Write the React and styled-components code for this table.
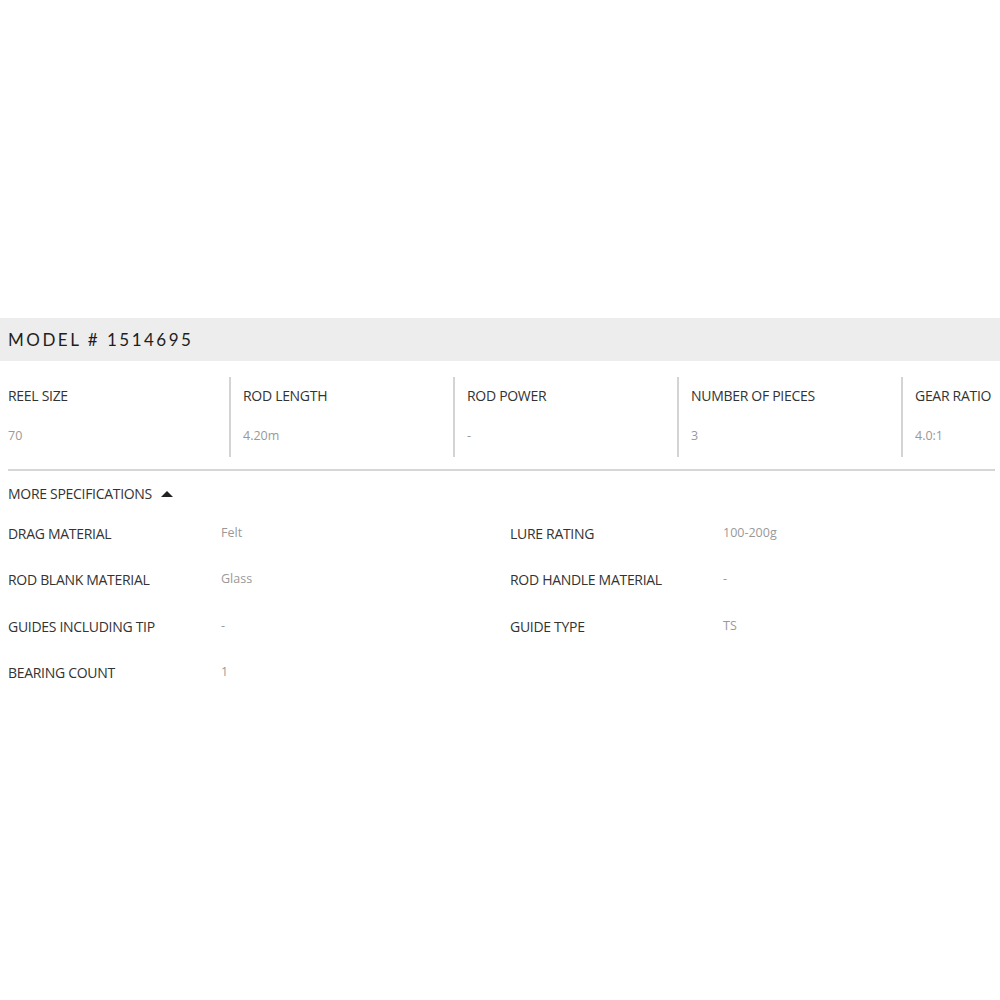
import styled, { createGlobalStyle } from 'styled-components';

const summary = [
  { label: 'REEL SIZE', value: '70' },
  { label: 'ROD LENGTH', value: '4.20m' },
  { label: 'ROD POWER', value: '-' },
  { label: 'NUMBER OF PIECES', value: '3' },
  { label: 'GEAR RATIO', value: '4.0:1' },
];

const more = [
  { label: 'DRAG MATERIAL', value: 'Felt' },
  { label: 'LURE RATING', value: '100-200g' },
  { label: 'ROD BLANK MATERIAL', value: 'Glass' },
  { label: 'ROD HANDLE MATERIAL', value: '-' },
  { label: 'GUIDES INCLUDING TIP', value: '-' },
  { label: 'GUIDE TYPE', value: 'TS' },
  { label: 'BEARING COUNT', value: '1' },
];

function App() {
  return (
    <>
      <GlobalStyle />
      <Page>
        <ModelBar>
          <ModelTitle>MODEL # 1514695</ModelTitle>
        </ModelBar>
        <SummaryRow>
          {summary.map((s, i) => (
            <SummaryCell key={s.label} first={i === 0}>
              <Label>{s.label}</Label>
              <SummaryValue>{s.value}</SummaryValue>
            </SummaryCell>
          ))}
        </SummaryRow>
        <MoreToggle>
          MORE SPECIFICATIONS
          <Caret />
        </MoreToggle>
        <SpecGrid>
          {more.map((s) => (
            <SpecItem key={s.label}>
              <Label>{s.label}</Label>
              <SpecValue>{s.value}</SpecValue>
            </SpecItem>
          ))}
        </SpecGrid>
      </Page>
    </>
  );
}

const GlobalStyle = createGlobalStyle`
  html, body {
    margin: 0;
    padding: 0;
    background: #fff;
    overflow-x: hidden;
  }
`;

const Page = styled.div`
  padding-top: 318px;
  font-family: 'Open Sans', sans-serif;
`;

const ModelBar = styled.div`
  height: 43px;
  background: #ededed;
  display: flex;
  align-items: center;
  padding-left: 8px;
`;

const ModelTitle = styled.h1`
  margin: 0;
  font-family: 'Lato', sans-serif;
  font-size: 17px;
  font-weight: 400;
  letter-spacing: 2.5px;
  color: #1e1e1e;
`;

const SummaryRow = styled.div`
  display: grid;
  grid-template-columns: 221px repeat(3, 224px) 1fr;
  margin: 16px 5px 0 8px;
  padding-bottom: 12px;
  border-bottom: 2px solid #d6d6d6;
`;

const SummaryCell = styled.div`
  display: flex;
  flex-direction: column;
  box-sizing: border-box;
  height: 80px;
  padding-top: 9px;
  padding-left: ${({ first }) => (first ? '0' : '12px')};
  border-left: ${({ first }) => (first ? 'none' : '2px solid #d4d4d4')};
`;

const Label = styled.div`
  font-size: 14px;
  color: #333;
  letter-spacing: -0.3px;
  white-space: nowrap;
`;

const SummaryValue = styled.div`
  margin-top: 22px;
  font-size: 12.5px;
  color: #999;
`;

const MoreToggle = styled.div`
  display: flex;
  align-items: center;
  gap: 9px;
  padding: 13px 0 0 8px;
  font-size: 14px;
  letter-spacing: -0.3px;
  color: #333;
`;

const Caret = styled.span`
  width: 0;
  height: 0;
  border-left: 6px solid transparent;
  border-right: 6px solid transparent;
  border-bottom: 6px solid #222;
`;

const SpecGrid = styled.div`
  display: grid;
  grid-template-columns: 502px 490px;
  row-gap: 25.8px;
  padding: 21px 0 0 8px;
`;

const SpecItem = styled.div`
  display: grid;
  grid-template-columns: 213px 1fr;
  align-items: start;
  height: 20.5px;
`;

const SpecValue = styled.div`
  font-size: 12.5px;
  color: #999;
  margin-top: 0;
`;

export default App;
